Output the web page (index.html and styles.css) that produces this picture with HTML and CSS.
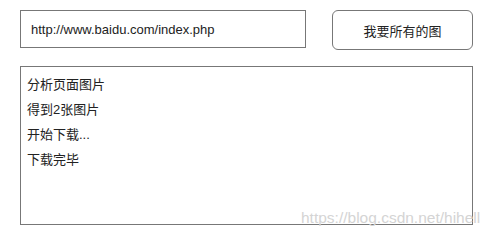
FILE: index.html
```html
<!DOCTYPE html>
<html lang="zh-CN">
<head>
<meta charset="utf-8">
<title>下载图片</title>
<link rel="stylesheet" href="styles.css">
</head>
<body>
<div class="page">
  <div class="toolbar">
    <input class="url" type="text" value="http://www.baidu.com/index.php">
    <button class="btn" type="button">我要所有的图</button>
  </div>
  <div class="log">
    <div class="line">分析页面图片</div>
    <div class="line">得到2张图片</div>
    <div class="line">开始下载...</div>
    <div class="line">下载完毕</div>
  </div>
  <div class="watermark">https://blog.csdn.net/hihell</div>
</div>
</body>
</html>
```
FILE: styles.css
```css
html, body {
  margin: 0;
  padding: 0;
  background: #ffffff;
}

body {
  font-family: "Liberation Sans", "Noto Sans CJK SC", sans-serif;
  font-size: 13px;
  color: #222222;
}

.page {
  position: relative;
  width: 490px;
  height: 234px;
  padding: 10px 0 0 20px;
  box-sizing: border-box;
}

.toolbar {
  display: flex;
  align-items: flex-start;
  gap: 26px;
}

.url {
  box-sizing: border-box;
  width: 286px;
  height: 38px;
  margin: 0;
  padding: 0 0 0 10px;
  border: 1px solid #777777;
  border-radius: 0;
  outline: none;
  background: #ffffff;
  font-family: "Liberation Sans", "Noto Sans CJK SC", sans-serif;
  font-size: 13px;
  color: #222222;
}

.btn {
  box-sizing: border-box;
  width: 141px;
  height: 40px;
  margin: 0;
  padding: 0;
  border: 1px solid #777777;
  border-radius: 6px;
  background: #ffffff;
  font-family: "Liberation Sans", "Noto Sans CJK SC", sans-serif;
  font-size: 13px;
  color: #222222;
}

.log {
  box-sizing: border-box;
  width: 453px;
  height: 159px;
  margin-top: 16px;
  padding: 5px 6px;
  border: 1px solid #777777;
  line-height: 25px;
}

.watermark {
  position: absolute;
  left: 301px;
  top: 210px;
  font-family: "Liberation Sans", sans-serif;
  font-size: 15.5px;
  line-height: 16px;
  color: #d4d4d4;
  white-space: nowrap;
}
```
